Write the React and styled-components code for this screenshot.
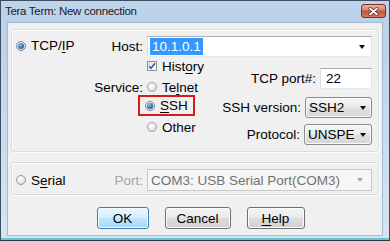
import React from 'react';
import styled, { createGlobalStyle, css } from 'styled-components';

const GlobalStyle = createGlobalStyle`
  *, *::before, *::after { box-sizing: border-box; }
  html, body { margin: 0; padding: 0; }
  body {
    width: 390px;
    height: 241px;
    overflow: hidden;
    font-family: "Liberation Sans", Arial, sans-serif;
    font-size: 13.5px;
    color: #000;
  }
  u { text-decoration-thickness: 1px; text-underline-offset: 2px; }
`;

const Window = styled.div`
  width: 390px;
  height: 241px;
  display: flex;
  flex-direction: column;
  border: 1px solid #3f4f60;
  border-bottom: 1px solid #1f3f48;
  padding: 0 6px 4px;
  background: linear-gradient(to bottom, #c0d5ec 0, #bbd1ea 21px, #cadcef 60%, #d6e5f2 calc(100% - 2px), #69c4d4 calc(100% - 2px));
`;

const TitleBar = styled.div`
  height: 21px;
  display: flex;
  align-items: flex-start;
  justify-content: space-between;
`;

const TitleText = styled.span`
  font-size: 11.5px;
  letter-spacing: -0.3px;
  line-height: 21px;
  margin-left: -2px;
  color: #1b1b1b;
`;

const CloseButton = styled.div`
  width: 25px;
  height: 14px;
  margin-top: 3px;
  margin-right: -3px;
  border: 1px solid #7a3226;
  border-radius: 3px;
  background: linear-gradient(to bottom, #ebb2a4 0%, #d98676 40%, #c5503d 52%, #d27a63 100%);
  display: flex;
  align-items: center;
  justify-content: center;
`;

const Client = styled.div`
  flex: 1;
  display: flex;
  flex-direction: column;
  background: #f0f0f0;
  border: 1px solid #a7bbd0;
  padding: 6px 3px 0 3px;
`;

const GroupBox = styled.div`
  display: flex;
  border: 1px solid #d5dfe5;
  border-radius: 3px;
  box-shadow: inset 1px 1px 0 #fff, 1px 1px 0 #fff;
  padding: ${p => (p.$compact ? '6px 6px 3px 4px' : '6px 6px 6px 4px')};
  margin-bottom: ${p => (p.$compact ? '12px' : '10px')};
`;

const LeadCol = styled.div`
  width: 68px;
  height: ${p => (p.$tall ? '21px' : '22px')};
  display: flex;
  align-items: center;
  margin-top: ${p => (p.$tall ? '-1px' : '0')};
`;

const Main = styled.div`
  flex: 1;
  display: flex;
  flex-direction: column;
`;

const FieldRow = styled.div`
  display: flex;
  align-items: center;
  gap: 4px;
`;

const FieldLabel = styled.span`
  width: 59px;
  flex: none;
  text-align: right;
  white-space: nowrap;
  color: ${p => (p.$disabled ? '#a3a3a3' : '#000')};
`;

const Choice = styled.label`
  display: inline-flex;
  align-items: center;
  gap: 5px;
  white-space: nowrap;
`;

const Radio = styled.span`
  width: 10px;
  height: 10px;
  flex: none;
  border-radius: 50%;
  border: 1px solid #979ca2;
  background: radial-gradient(circle at 40% 35%, #ffffff 0%, #e6e8eb 55%, #cfd3d8 100%);
  display: flex;
  align-items: center;
  justify-content: center;
  ${p => p.$checked && css`
    border-color: #7e8690;
    &::after {
      content: '';
      width: 6px;
      height: 6px;
      border-radius: 50%;
      background: radial-gradient(circle at 40% 35%, #8cc4f0 0%, #2f70b4 55%, #163e73 100%);
    }
  `}
`;

const Check = styled.span`
  width: 10px;
  height: 10px;
  flex: none;
  border: 1px solid #8e9296;
  background: linear-gradient(135deg, #dcdfe3, #ffffff);
  display: flex;
  align-items: center;
  justify-content: center;
`;

const Arrow = styled.span`
  width: 0;
  height: 0;
  flex: none;
  margin-left: auto;
  border-left: 3.5px solid transparent;
  border-right: 3.5px solid transparent;
  border-top: 4px solid ${p => (p.$disabled ? '#a8a8a8' : '#111')};
`;

const HostCombo = styled.div`
  flex: 1;
  height: 21px;
  display: flex;
  align-items: center;
  background: #fff;
  border: 1px solid #dbdfe6;
  border-top-color: #abadb3;
  border-bottom-color: #e3e9ef;
  padding: 1px 6px 1px 2px;
`;

const Selected = styled.span`
  height: 100%;
  display: flex;
  align-items: center;
  background: #3399ff;
  color: #fff;
  padding: 0 2px;
`;

const Lower = styled.div`
  display: flex;
  align-items: flex-start;
`;

const Options = styled.div`
  display: flex;
  flex-direction: column;
`;

const OptionRow = styled.div`
  height: ${p => (p.$boxed ? '21px' : '18px')};
  margin-top: ${p => p.$mt || 0}px;
  display: flex;
  align-items: center;
  gap: 4px;
`;

const Highlight = styled.div`
  height: 21px;
  display: flex;
  align-items: center;
  margin-left: -9px;
  border: 2px solid #d61a1a;
  padding: 0 5px 0 5px;
`;

const Settings = styled.div`
  margin-left: auto;
  display: flex;
  flex-direction: column;
  align-items: flex-end;
`;

const SettingRow = styled.div`
  margin-top: ${p => p.$mt}px;
  display: flex;
  align-items: center;
  gap: 4px;
`;

const TextBox = styled.div`
  width: 52px;
  height: 21px;
  display: flex;
  align-items: center;
  padding-left: 5px;
  background: #fff;
  border: 1px solid #dbdfe6;
  border-top-color: #abadb3;
  border-bottom-color: #e3e9ef;
`;

const DropButton = styled.div`
  width: ${p => p.$w}px;
  height: 21px;
  display: flex;
  align-items: center;
  gap: 3px;
  padding: 0 5px 0 3px;
  border: 1px solid #8a8a8a;
  border-radius: 3px;
  background: linear-gradient(to bottom, #f4f4f4 0%, #ececec 48%, #e0e0e0 52%, #d6d6d6 100%);
  box-shadow: inset 0 0 0 1px #fbfbfb;
  white-space: nowrap;
`;

const DisabledCombo = styled.div`
  flex: 1;
  height: 22px;
  display: flex;
  align-items: center;
  padding: 0 8px 0 3px;
  background: #f6f6f6;
  border: 1px solid #c9c9c9;
  color: #727272;
`;

const ButtonRow = styled.div`
  display: flex;
  justify-content: center;
  gap: 16px;
  padding-left: 11px;
`;

const Button = styled.button`
  width: ${p => p.$w}px;
  height: 22px;
  padding: 0;
  font-family: "Liberation Sans", Arial, sans-serif;
  font-size: 13.5px;
  color: #000;
  border: 1px solid #707070;
  border-radius: 3px;
  background: linear-gradient(to bottom, #f3f3f3 0%, #ebebeb 46%, #dddddd 52%, #cfcfcf 100%);
  box-shadow: inset 0 0 0 1px #fcfcfc;
  ${p => p.$primary && css`
    border-color: #3c7fb1;
    background: linear-gradient(to bottom, #eaf6fd 0%, #d9f0fc 46%, #bee6fd 52%, #a7d9f5 100%);
    box-shadow: inset 0 0 0 1px #f4fbff;
  `}
`;

export default function App() {
  return (
    <>
      <GlobalStyle />
      <Window>
        <TitleBar>
          <TitleText>Tera Term: New connection</TitleText>
          <CloseButton>
            <svg width="11" height="9" viewBox="0 0 11 9">
              <path d="M2 1.5 L9 7.5 M9 1.5 L2 7.5" stroke="#5a1d14" strokeWidth="3" strokeLinecap="round" />
              <path d="M2 1.5 L9 7.5 M9 1.5 L2 7.5" stroke="#ffffff" strokeWidth="1.8" strokeLinecap="round" />
            </svg>
          </CloseButton>
        </TitleBar>

        <Client>
          <GroupBox>
            <LeadCol $tall>
              <Choice><Radio $checked /><span>TCP/<u>I</u>P</span></Choice>
            </LeadCol>
            <Main>
              <FieldRow>
                <FieldLabel>Host:</FieldLabel>
                <HostCombo>
                  <Selected>10.1.0.1</Selected>
                  <Arrow />
                </HostCombo>
              </FieldRow>
              <Lower>
                <Options>
                  <OptionRow>
                    <FieldLabel />
                    <Choice>
                      <Check>
                        <svg width="8" height="8" viewBox="0 0 8 8">
                          <path d="M1 4.2 L3 6.3 L7 1.2" fill="none" stroke="#3d5a94" strokeWidth="1.6" />
                        </svg>
                      </Check>
                      <span>Hist<u>o</u>ry</span>
                    </Choice>
                  </OptionRow>
                  <OptionRow $mt={3}>
                    <FieldLabel>Service:</FieldLabel>
                    <Choice><Radio /><span>Te<u>l</u>net</span></Choice>
                  </OptionRow>
                  <OptionRow $mt={-1} $boxed>
                    <FieldLabel />
                    <Highlight>
                      <Choice><Radio $checked /><span><u>S</u>SH</span></Choice>
                    </Highlight>
                  </OptionRow>
                  <OptionRow $mt={2}>
                    <FieldLabel />
                    <Choice><Radio /><span>Other</span></Choice>
                  </OptionRow>
                </Options>
                <Settings>
                  <SettingRow $mt={11}>
                    <span>TCP port#:</span>
                    <TextBox>22</TextBox>
                  </SettingRow>
                  <SettingRow $mt={8}>
                    <span>SSH version:</span>
                    <DropButton $w={67}>SSH2<Arrow /></DropButton>
                  </SettingRow>
                  <SettingRow $mt={6}>
                    <span>Protocol:</span>
                    <DropButton $w={68}>UNSPE<Arrow /></DropButton>
                  </SettingRow>
                </Settings>
              </Lower>
            </Main>
          </GroupBox>

          <GroupBox $compact>
            <LeadCol>
              <Choice><Radio /><span>S<u>e</u>rial</span></Choice>
            </LeadCol>
            <Main>
              <FieldRow>
                <FieldLabel $disabled>Port:</FieldLabel>
                <DisabledCombo>
                  COM3: USB Serial Port(COM3)
                  <Arrow $disabled />
                </DisabledCombo>
              </FieldRow>
            </Main>
          </GroupBox>

          <ButtonRow>
            <Button $primary $w={52}>OK</Button>
            <Button $w={66}>Cancel</Button>
            <Button $w={58}><u>H</u>elp</Button>
          </ButtonRow>
        </Client>
      </Window>
    </>
  );
}
